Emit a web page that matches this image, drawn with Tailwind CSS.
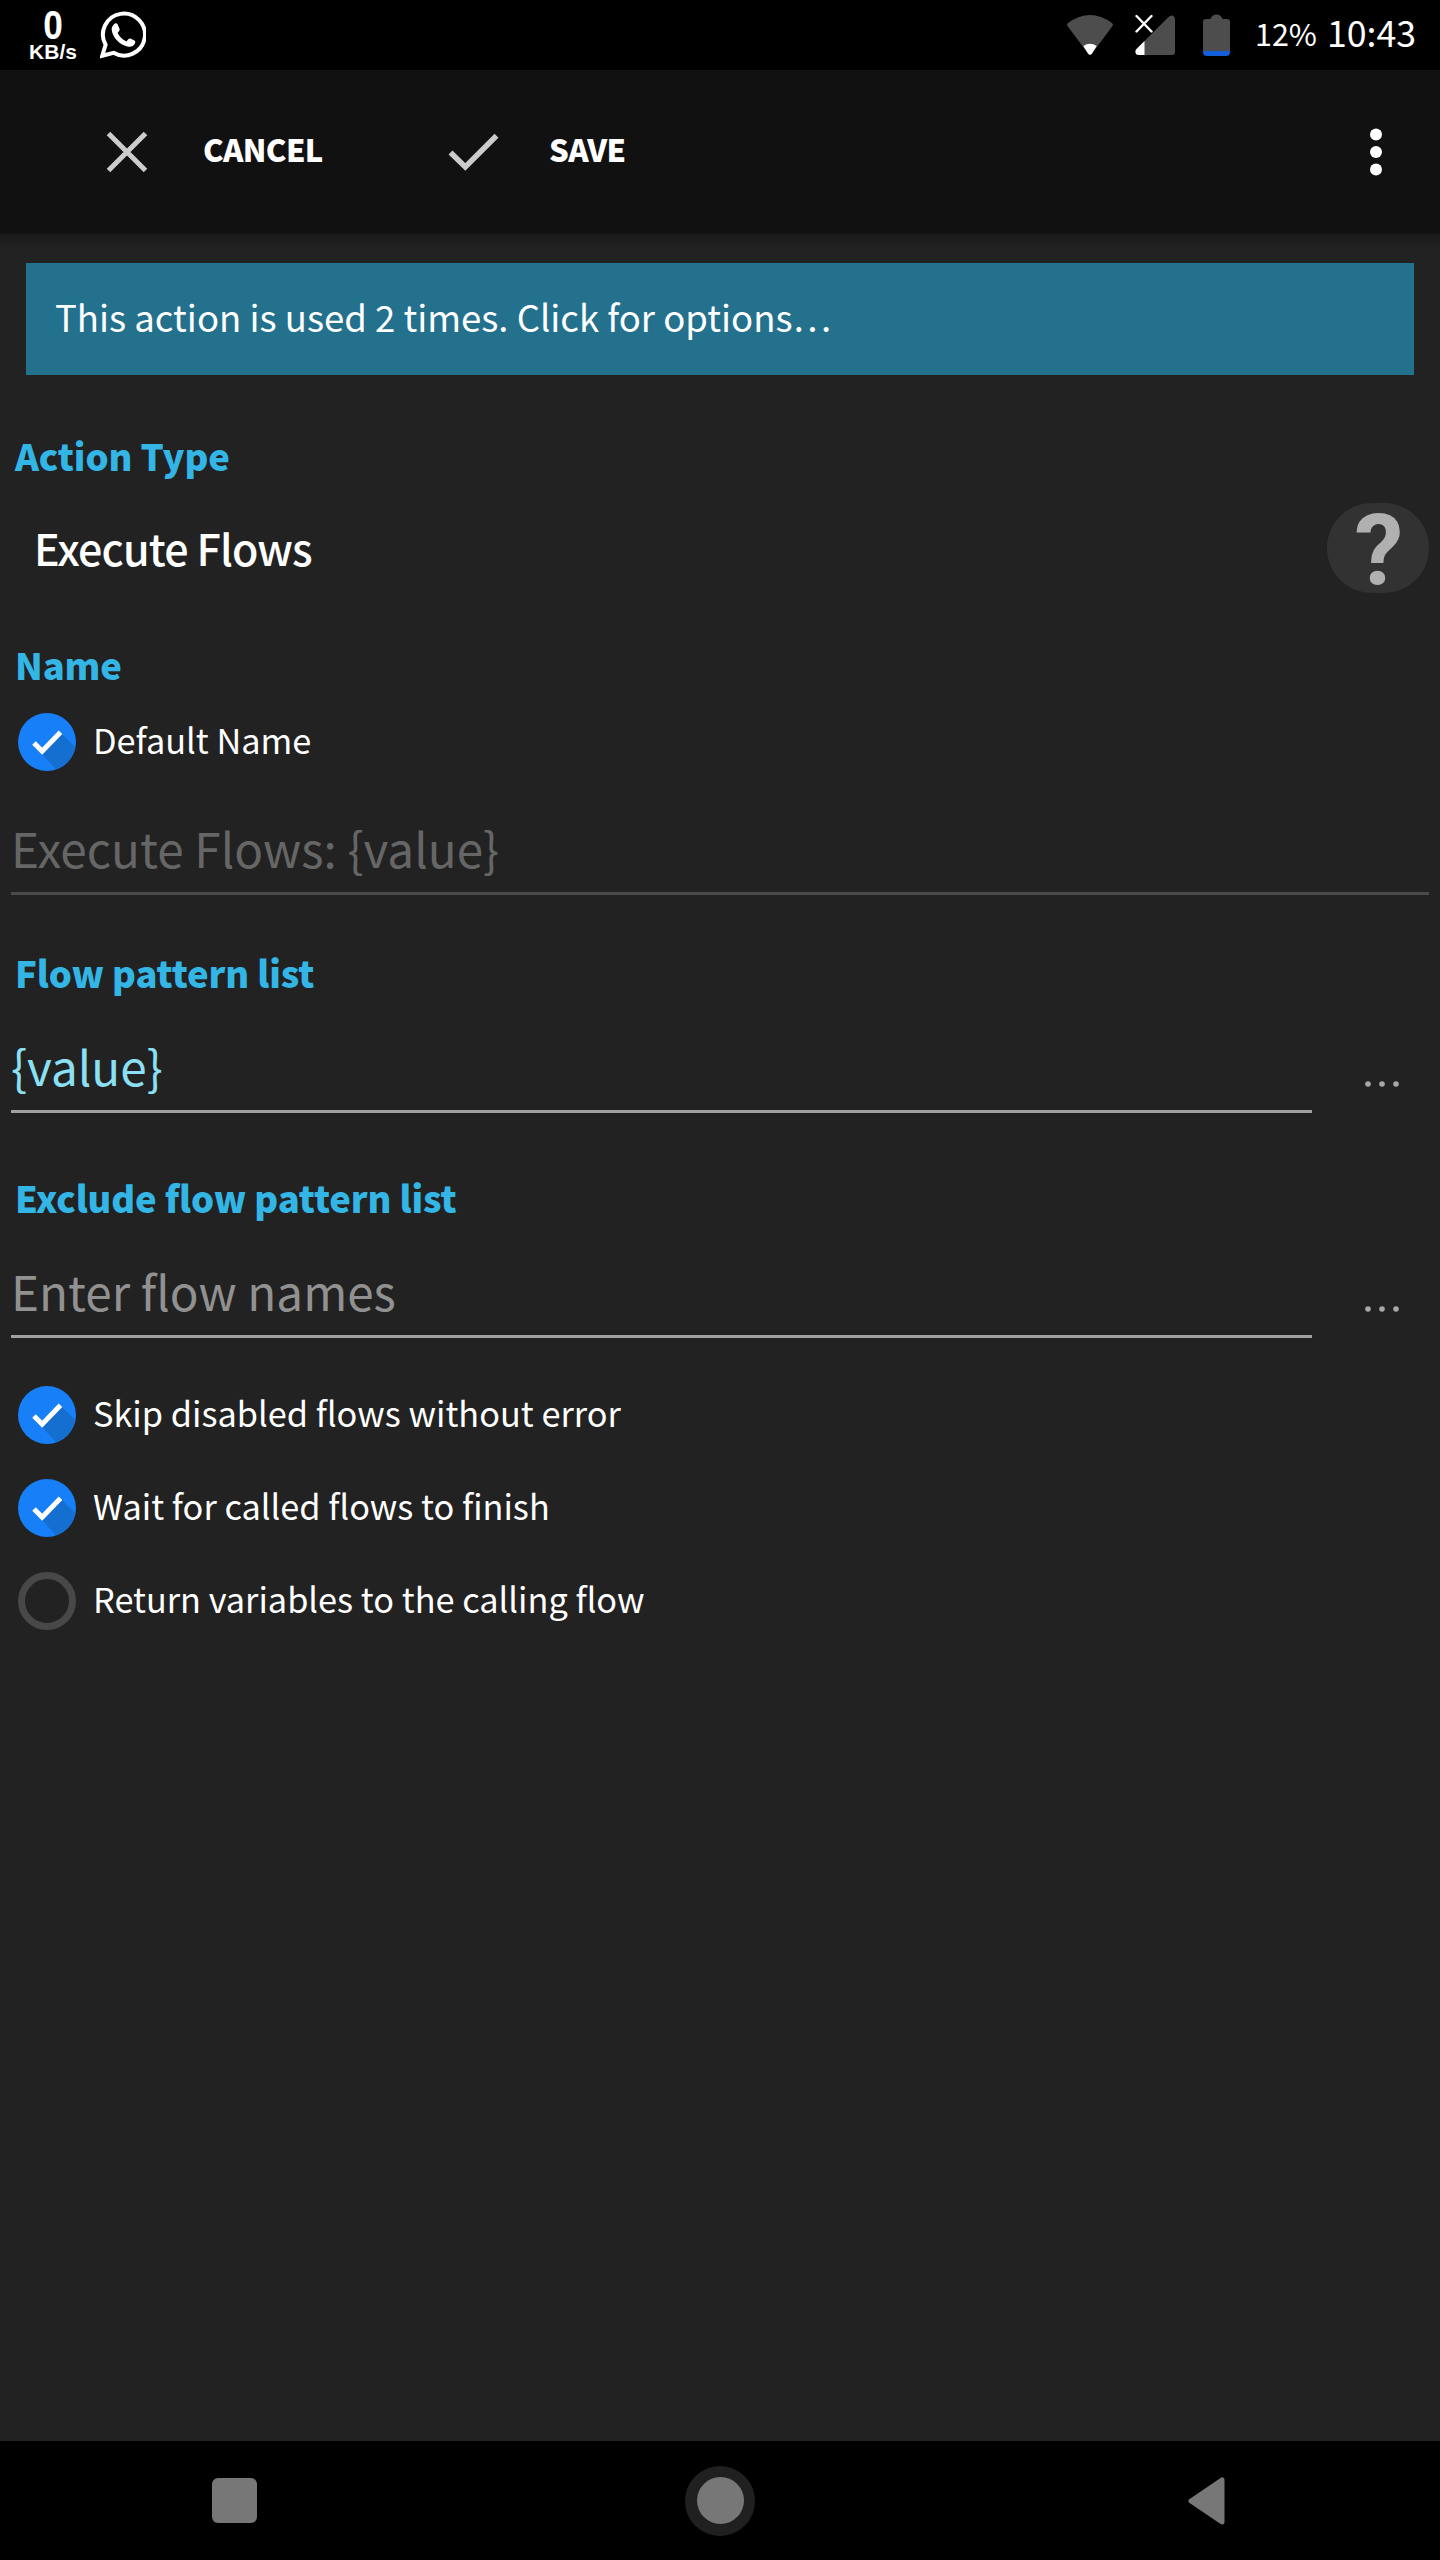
<!DOCTYPE html>
<html lang="en">
<head>
  <meta charset="UTF-8" />
  <meta name="viewport" content="width=device-width,initial-scale=1" />
  <title>Execute Flows</title>
  <script src="https://cdn.jsdelivr.net/npm/@tailwindcss/browser@4"></script>
</head>
<body class="w-[1440px] h-[2560px] flex flex-col bg-[#222222] text-white overflow-hidden font-['Noto_Sans_CJK_KR','Noto_Sans',sans-serif]">

  <!-- status bar -->
  <header class="h-[70px] shrink-0 bg-black flex items-center justify-between pl-[28px] pr-[24px]">
    <div class="flex items-center gap-[22px]">
      <div class="w-[50px] h-[70px] pt-[8px] flex flex-col items-center font-['Liberation_Sans',sans-serif] font-bold">
        <span class="text-[40px] leading-[35px] scale-x-88">0</span>
        <span class="text-[21px] leading-[18px]">KB/s</span>
      </div>
      <svg class="w-[46px] h-[48px]" viewBox="0 0 46 48" fill="none">
        <path d="M2.2 44.8L5.6 33.8A21 21 0 1 1 13.5 41.8Z" stroke="#fff" stroke-width="4" />
        <path d="M14 13.2c1.600-1.500 3.200-.9 3.800.6l1.800 4.300c.3 1-.2 1.800-2 3.900 2 4 5 6.800 9 8.400 1.900-2.600 2.600-3.300 3.800-2.800l4 2c1.200.7 1.100 1.400.5 3-1 2.500-4.200 3.600-6.700 3.100C19.800 34 12.600 26.500 11.700 19c-.2-2.300.8-4.400 2.300-5.800z" fill="#fff" />
      </svg>
    </div>
    <div class="flex items-center">
      <svg class="w-[46px] h-[42px] mr-[22px]" viewBox="0 0 46 42">
        <path d="M1 9Q23-7 45 9Q46.500 10.500 45.500 12L25 39.500Q23 42 21 39.500L.5 12Q-.5 10.500 1 9Z" fill="#4d4d4d" />
        <path d="M16.300 32Q23 27.500 29.700 32L25 39.500Q23 42 21 39.500Z" fill="#fff" />
      </svg>
      <svg class="w-[41px] h-[42px] mr-[27px]" viewBox="0 0 41 42">
        <path d="M33.500 3Q35.500 1 37.500 1.500T40 5V38Q40 41 37 41H4Q1 41 .5 38.500T1.500 35Z" fill="#4d4d4d" />
        <path d="M9.500 27V41H4Q1 41 .5 38.500T1.500 35Z" fill="#fff" />
        <path d="M1.500 2L16.500 17.500M16.500 2L1.500 17.500" stroke="#fff" stroke-width="2.400" stroke-linecap="round" />
      </svg>
      <svg class="w-[27px] h-[44px] mr-[25px]" viewBox="0 0 27 44">
        <path d="M3 6H7.500Q9 1.500 13.500 1.500T19.500 6H24Q27 6 27 9V38H0V9Q0 6 3 6Z" fill="#4d4d4d" />
        <path d="M0 38H27V39Q27 43 23 43H4Q0 43 0 39Z" fill="#135fd9" />
      </svg>
      <span class="w-[72px] pb-[4px] text-[30.500px] leading-[60px] whitespace-nowrap">12%</span>
      <span class="w-[89px] pb-[7px] text-[35.700px] leading-[60px] whitespace-nowrap">10:43</span>
    </div>
  </header>

  <!-- action bar -->
  <nav class="h-[164px] shrink-0 bg-[#111111] flex items-center pl-[106px] pr-[58px]">
    <svg class="w-[42px] h-[42px]" viewBox="0 0 42 42"><path d="M2.500 2.500L39.500 39.500M39.500 2.500L2.500 39.500" stroke="#cccccc" stroke-width="5" /></svg>
    <span class="w-[299px] pl-[55px] pb-[7px] text-[31px] font-black leading-[60px] tracking-[-0.65px]">CANCEL</span>
    <svg class="w-[54px] h-[42px]" viewBox="0 0 54 42"><path d="M3.500 21.500L18.300 36L49.500 4.800" fill="none" stroke="#cccccc" stroke-width="5.500" /></svg>
    <span class="pl-[48px] pb-[7px] text-[31px] font-black leading-[60px] tracking-[-0.65px]">SAVE</span>
    <svg class="w-[12px] h-[48px] ml-auto" viewBox="0 0 12 48" fill="#fff"><circle cx="6" cy="6.500" r="6" /><circle cx="6" cy="24" r="6" /><circle cx="6" cy="41.500" r="6" /></svg>
  </nav>
  <div class="h-[16px] -mb-[16px] shrink-0 bg-linear-to-b from-[#1a1a1a] to-[#222222]"></div>

  <main class="flex-1 flex flex-col">
    <div class="mt-[29px] mx-[26px] h-[112px] pl-[29px] pb-[4px] bg-[#23718d] flex items-center text-[36.500px] whitespace-nowrap">This action is used 2 times. Click for options…</div>

    <h2 class="mt-[54px] h-[52px] pl-[15px] text-[36.400px] leading-[52px] font-black tracking-[-0.15px] text-[#33b5e5]">Action Type</h2>
    <div class="mt-[22px] h-[90px] pl-[34px] pr-[11px] flex items-center justify-between">
      <span class="pb-[2px] text-[43px] leading-[60px] font-medium tracking-[-0.85px]">Execute Flows</span>
      <button class="w-[102px] h-[90px] pl-[2px] pt-[5px] rounded-[45px] bg-[#323232] text-[#b0b0b0] font-['Roboto',sans-serif] font-bold text-[98px] leading-[85px]">?</button>
    </div>

    <h2 class="mt-[45px] h-[52px] pl-[15px] text-[36.400px] leading-[52px] font-black tracking-[-0.15px] text-[#33b5e5]">Name</h2>
    <label class="mt-[23px] h-[58px] pl-[18px] flex items-center gap-[17px]">
      <svg class="w-[58px] h-[58px]" viewBox="0 0 58 58"><circle cx="29" cy="29" r="29" fill="#1780f8" /><path d="M24 41L43 20L57.200 34A29 29 0 0 1 38 56.200Z" fill="#146fd0" /><path d="M16 30L24.200 38.200L42.500 19.300" fill="none" stroke="#fff" stroke-width="5" /></svg>
      <span class="pb-[6px] text-[34.300px] leading-[50px]">Default Name</span>
    </label>
    <div class="mx-[11px] h-[124px] pt-[33px] border-b-[3px] border-[#4a4a4a] flex items-center text-[47.700px] leading-[70px] text-[#666666]">Execute Flows: {value}</div>

    <h2 class="mt-[51px] h-[52px] pl-[15px] text-[36.400px] leading-[52px] font-black tracking-[-0.15px] text-[#33b5e5]">Flow pattern list</h2>
    <div class="-mt-[1px] pl-[11px] flex items-center">
      <div class="w-[1301px] h-[116px] pt-[25px] border-b-[3px] border-[#a0a0a0] flex items-center text-[47.700px] leading-[70px] text-[#8be0f4]">{value}</div>
      <svg class="w-[34px] h-[6px] mt-[57px] ml-[53px]" viewBox="0 0 34 6" fill="#a8a8a8"><circle cx="3" cy="3" r="2.800" /><circle cx="17" cy="3" r="2.800" /><circle cx="31" cy="3" r="2.800" /></svg>
    </div>

    <h2 class="mt-[58px] h-[52px] pl-[15px] text-[36.400px] leading-[52px] font-black tracking-[-0.15px] text-[#33b5e5]">Exclude flow pattern list</h2>
    <div class="-mt-[1px] pl-[11px] flex items-center">
      <div class="w-[1301px] h-[116px] pt-[25px] border-b-[3px] border-[#a0a0a0] flex items-center text-[47.600px] leading-[70px] text-[#919191]">Enter flow names</div>
      <svg class="w-[34px] h-[6px] mt-[57px] ml-[53px]" viewBox="0 0 34 6" fill="#a8a8a8"><circle cx="3" cy="3" r="2.800" /><circle cx="17" cy="3" r="2.800" /><circle cx="31" cy="3" r="2.800" /></svg>
    </div>

    <div class="mt-[48px] pl-[18px] flex flex-col gap-[35px] text-[34.300px] leading-[50px]">
      <label class="h-[58px] flex items-center gap-[17px]">
        <svg class="w-[58px] h-[58px]" viewBox="0 0 58 58"><circle cx="29" cy="29" r="29" fill="#1780f8" /><path d="M24 41L43 20L57.200 34A29 29 0 0 1 38 56.200Z" fill="#146fd0" /><path d="M16 30L24.200 38.200L42.500 19.300" fill="none" stroke="#fff" stroke-width="5" /></svg>
        <span class="pb-[7px]">Skip disabled flows without error</span>
      </label>
      <label class="h-[58px] flex items-center gap-[17px]">
        <svg class="w-[58px] h-[58px]" viewBox="0 0 58 58"><circle cx="29" cy="29" r="29" fill="#1780f8" /><path d="M24 41L43 20L57.200 34A29 29 0 0 1 38 56.200Z" fill="#146fd0" /><path d="M16 30L24.200 38.200L42.500 19.300" fill="none" stroke="#fff" stroke-width="5" /></svg>
        <span class="pb-[7px]">Wait for called flows to finish</span>
      </label>
      <label class="h-[58px] flex items-center gap-[17px]">
        <span class="w-[58px] h-[58px] rounded-full border-[7px] border-[#484848]"></span>
        <span class="pb-[7px]">Return variables to the calling flow</span>
      </label>
    </div>
  </main>

  <!-- navigation bar -->
  <footer class="h-[119px] shrink-0 bg-black flex items-center pl-[212px]">
    <div class="w-[45px] h-[45px] rounded-[6px] bg-[#777777]"></div>
    <div class="w-[70px] h-[70px] ml-[428px] mr-[433px] rounded-full bg-[#202020] flex items-center justify-center">
      <div class="w-[47px] h-[47px] rounded-full bg-[#777777]"></div>
    </div>
    <svg class="w-[37px] h-[48px]" viewBox="0 0 37 48"><path d="M3 24L34 3V45Z" fill="#777777" stroke="#777777" stroke-width="5" stroke-linejoin="round" /></svg>
  </footer>
</body>
</html>
